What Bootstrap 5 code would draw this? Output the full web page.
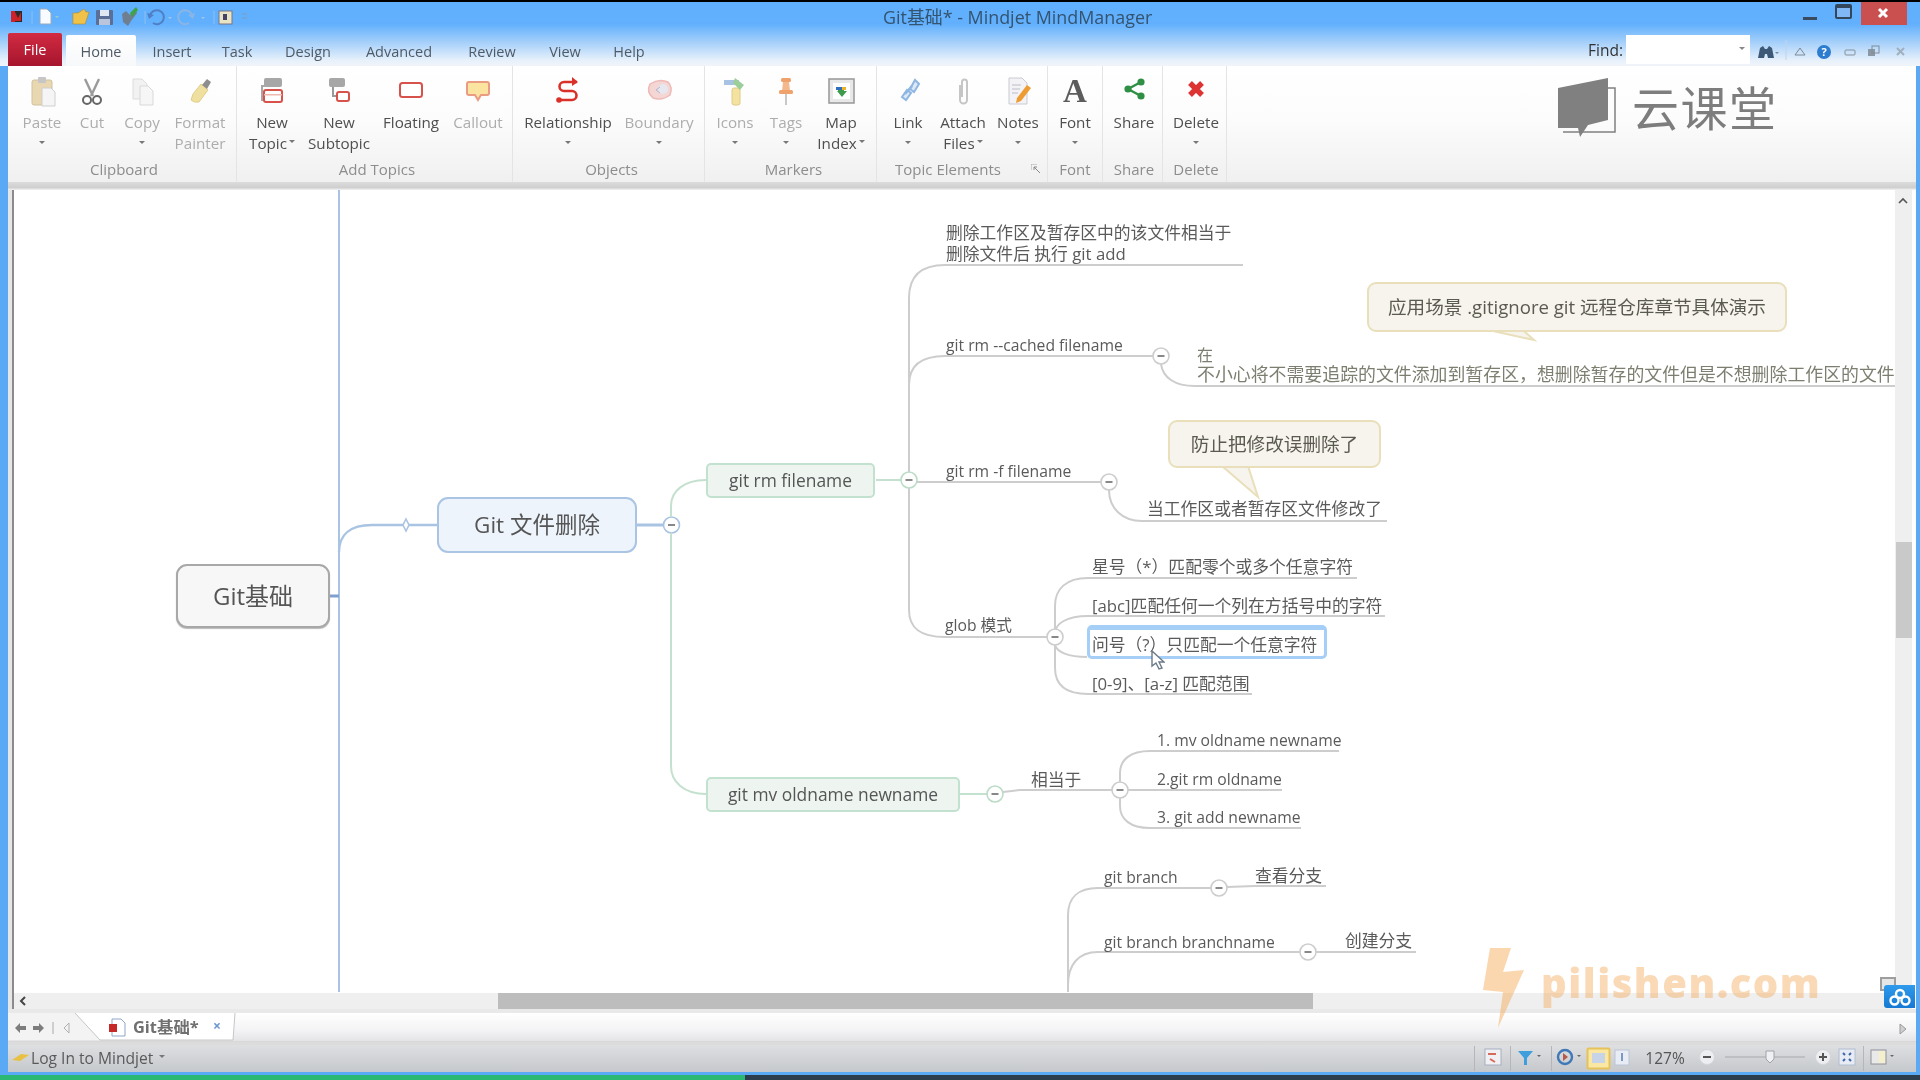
<!DOCTYPE html>
<html lang="zh-CN">
<head>
<meta charset="utf-8">
<title>Git基础 - Mindjet MindManager</title>
<link href="https://cdn.jsdelivr.net/npm/bootstrap@5.3.0/dist/css/bootstrap.min.css" rel="stylesheet">
<style>
html,body{height:100%;overflow:hidden;background:#000}
body{font-family:"Open Sans","Noto Sans CJK SC",sans-serif;color:#555}
.blurwrap{filter:blur(.7px);height:1080px;width:1920px;position:relative;overflow:hidden}
.blackline{height:2px;background:#000}
.frame{height:1073px;background:#5aa9f5;padding:0 4px 0 8px}
.chrome{margin:0 -4px 0 -8px;height:64px;flex:none;background:linear-gradient(180deg,#5fb0ff 0,#62b0fd 22px,#a4cffa 40px,#e6f0fb 58px,#f1f5fa 64px)}
.titlerow{height:31px}
.qat{margin-left:8px;width:260px;height:30px;flex:none}
.wtitle{margin-left:615px;font-size:17.9px;color:#34536f;line-height:31px;white-space:nowrap}
.winbtns{width:118px;height:31px;flex:none;margin-right:0}
.menurow{height:33px;padding-left:8px}
.filetab{width:54px;height:33px;background:linear-gradient(180deg,#d22b42,#a5152d);color:#fff;font-size:14.5px;border-radius:2px 2px 0 0;margin-right:4px}
.mtab{height:31px;margin-top:2px;padding-top:2px;font-size:14.5px;color:#4e5a66}
.mtab.on{background:linear-gradient(180deg,#fff,#f7f8fa);border-radius:2px 2px 0 0}
.t58{width:58px}.t70{width:70px}.t72{width:72px}.t84{width:84px}.t88{width:88px}.t98{width:98px}
.findbox{margin-left:auto;width:332px;height:31px;margin-right:0;flex:none}
.findlbl{font-size:15.5px;color:#333;width:38px;padding-top:6px}
.findinput{width:124px;height:29px;margin-top:2px;background:#fff;position:relative}
.findinput::after{content:"";position:absolute;right:5px;top:12px;border:3px solid transparent;border-top-color:#888}
.ribbon{height:116px;flex:none;background:linear-gradient(180deg,#fff 0,#fcfcfc 45%,#f0f0f1 100%)}
.ribbonfoot{height:8px;flex:none;background:linear-gradient(180deg,#dcdcdc,#cfcfcf 70%,#f3f3f3)}
.rg{height:116px;border-right:1px solid #e4e4e4;flex:none;padding-top:8px;position:relative}
.g1{width:229px;padding-left:4px}.g2{width:276px;padding-left:5px}.g3{width:192px;padding-left:6px}.g4{width:172px;padding-left:6px}.g5{width:171px;padding-left:8px}.g6{width:55px}.g7{width:60px;padding-left:3px}.g8{width:64px;padding-left:3px}
.rbs{height:85px}
.rb{font-size:15.2px;line-height:21px;color:#4f4f4f;white-space:nowrap;flex:none}
.rb.off{color:#adadad}
.ric{height:34px;margin-bottom:4px}
.ric svg{display:block}
.bw40{width:40px}.bw46{width:46px}.bw48{width:48px}.bw54{width:54px}.bw56{width:56px}.bw60{width:60px}.bw64{width:64px}.bw70{width:70px}.bw74{width:74px}.bw84{width:84px}.bw98{width:98px}
.dn{display:block;width:0;height:0;margin:8px auto 0;border:3px solid transparent;border-top-color:#777;border-bottom:0}
.up{display:inline-block;width:0;height:0;margin-left:2px;vertical-align:6px;border:3px solid transparent;border-top-color:#777;border-bottom:0}
.rgl{font-size:15px;line-height:20px;color:#8d8d8d;text-align:center;white-space:nowrap}
.rgl.shift{padding-right:36px}
.launch{position:absolute;right:7px;bottom:9px;width:9px;height:9px}
.fa{font-family:"Liberation Serif",serif;font-weight:700;font-size:33px;line-height:34px;color:#5c5c5c}
.brand{position:absolute;left:1550px;top:70px;height:76px}
.brandtxt{font-family:"Noto Sans CJK SC",sans-serif;font-weight:400;font-size:47px;color:#7d7d7d;letter-spacing:1.5px;line-height:60px;margin-left:12px;margin-top:6px}
.work{height:819px;flex:none;background:#fff;position:relative}
.leftrule{width:6px;flex:none;background:linear-gradient(90deg,#e6e6e6 0 4px,#8b8b8b 4px 6px)}
.mapcol{flex:1;min-width:0;position:relative}
.mapcanvas{position:absolute;left:0;right:0;top:0;bottom:16px;overflow:hidden;background:#fff}
.plane{position:absolute;left:-14px;top:-190px;width:1920px;height:1080px}
.plane svg.wires{position:absolute;left:0;top:0}
.hbar{position:absolute;left:0;right:0;bottom:0;height:16px;background:#efefef}
.hthumb{position:absolute;left:484px;width:815px;top:0;bottom:0;background:#bdbdbd}
.harrow{position:absolute;left:5px;top:2px}
.vbar{width:21px;flex:none;background:#efefef;position:relative;border-right:4px solid #fff}
.vthumb{position:absolute;left:1px;right:0;top:352px;height:96px;background:#c9c9c9}
.varrow{position:absolute;left:3px;top:7px}
.node,.lab,.co{position:absolute;white-space:nowrap}
.node{display:flex;align-items:center;justify-content:center;color:#555}
.lab{transform:translateY(-50%);font-size:15.7px;line-height:18px;color:#5a5a5a}
.cj{font-size:16.8px}
.root{left:176px;top:564px;width:154px;height:64px;background:#f7f7f7;border:2px solid #a8a8a8;border-radius:11px;font-size:24px;box-shadow:0 1px 1px #bbb}
.main{left:437px;top:497px;width:200px;height:56px;background:#eef4fc;border:2.5px solid #aac4e4;border-radius:11px;font-size:22.5px}
.sub1{left:706px;top:463px;width:169px;height:35px;background:#eef5f0;border:2px solid #c2e2cf;border-radius:5px;font-size:17.4px}
.sub2{left:706px;top:777px;width:254px;height:35px;background:#eef5f0;border:2px solid #c2e2cf;border-radius:5px;font-size:17.4px}
.sel{position:absolute;left:1087px;top:625px;width:240px;height:34px;border:3px solid #a6cff8;border-top-width:5px;border-radius:5px;background:#fff}
.co{background:#f6f4ec;border:2px solid #e9dfbb;border-radius:9px;color:#5a5a50;font-size:18.6px;display:flex;align-items:center;justify-content:center}
.co1{left:1367px;top:282px;width:420px;height:50px}
.co2{left:1168px;top:420px;width:213px;height:48px}
.l1{left:946px;top:233px}.l2{left:946px;top:254px}.l3{left:946px;top:345px}
.l5{left:1197px;top:364px;font-size:17.9px;line-height:19px;color:#7d7d70}
.fc{font-size:16px}
.l6{left:946px;top:471px}.l7{left:1147px;top:509px}.l8{left:945px;top:625px}
.l9{left:1092px;top:567px}.l10{left:1092px;top:606px}.l11{left:1092px;top:645px}.l12{left:1092px;top:684px}
.l13{left:1031px;top:780px}.l14{left:1157px;top:740px}.l15{left:1157px;top:779px}.l16{left:1157px;top:817px}
.l17{left:1104px;top:877px}.l18{left:1255px;top:876px}.l19{left:1104px;top:942px}.l20{left:1345px;top:941px}
.cursor{position:absolute;left:1151px;top:650px}
.gap4{height:4px;flex:none;background:#e9e9e9}
.tabstrip{height:29px;flex:none;background:linear-gradient(180deg,#fff,#f4f4f6 60%,#e4e4e6);position:relative;border-bottom:1px solid #d8d8d8}
.tabsvg{position:absolute;left:-8px;top:0}
.tabtxt{position:absolute;left:125px;top:14px;transform:translateY(-50%);font-size:16.4px;font-weight:700;color:#707070;white-space:nowrap}
.tabclose{position:absolute;left:205px;top:13px;transform:translateY(-50%);font-size:14px;font-weight:700;color:#6f97cf;line-height:1}
.tabright{position:absolute;right:9px;top:10px}
.gap3{height:3px;flex:none;background:#dcdcdc}
.status{height:27px;flex:none;background:linear-gradient(180deg,#dedfe1,#c5c8cc);font-size:15.6px;color:#5a5a5a;position:relative;padding-right:11px}
.statl{padding-left:23px}
.statlogin{position:absolute;left:3px;top:7px}
.pct{width:40px;text-align:center;font-size:15.5px;color:#555}
.botblue{height:3px;flex:none;margin:0 -4px 0 -8px;background:#5aa9f5}
.botbar{height:5px;background:#2c3d4e;position:relative}
.botgreen{position:absolute;left:0;top:0;bottom:0;width:745px;background:#2bb873}
.wm{position:absolute;left:1480px;top:945px;pointer-events:none}
.wmtxt{position:absolute;left:1541px;top:957px;font-family:"Open Sans",sans-serif;font-weight:800;font-size:40px;letter-spacing:1.5px;line-height:52px;color:rgba(243,165,80,.42);white-space:nowrap;pointer-events:none}
.cloud{position:absolute;left:1884px;top:985px;width:31px;height:23px;background:linear-gradient(180deg,#2f9bec,#1678d2);border-radius:3px 0 0 3px}
.sqicon{position:absolute;left:1880px;top:977px;width:16px;height:14px;border:2px solid #9e9e9e;background:#e6e6e6}
</style>
</head>
<body>
<div class="blurwrap">
  <div class="blackline"></div>
  <div class="frame d-flex flex-column">
    <div class="chrome d-flex flex-column">
      <div class="titlerow d-flex">
        <svg class="qat" viewBox="8 2 260 30">
          <rect x="11" y="11" width="5" height="11" fill="#d0202c"/><path d="M15 11h7v11h-7z" fill="#2a2a2a"/><path d="M15 12l3 6 3-6v9h-6z" fill="#c22"/>
          <line x1="32" y1="11" x2="32" y2="24" stroke="#8fbfee"/>
          <path d="M40 9h7l4 4v11H40z" fill="#f8fbff" stroke="#9ab"/><path d="M55 16l2 2 2-2z" fill="#9cc"/>
          <path d="M73 13h5l6-4 2 3h3l-4 12H73z" fill="#f0c24a" stroke="#b98a20" stroke-width=".6"/>
          <rect x="96" y="10" width="17" height="15" rx="1" fill="#5a6f98"/><rect x="100" y="10" width="9" height="6" fill="#dfe7f2"/><rect x="99" y="19" width="11" height="6" fill="#b9c5db"/>
          <path d="M122 14l4-3 4 4 5-6 2 4-6 8-3 5-5-4z" fill="#6f7f90"/><path d="M130 13l6-6 2 3-6 7z" fill="#3fa34a"/>
          <line x1="145" y1="11" x2="145" y2="24" stroke="#8fbfee"/>
          <path d="M150 16a7 7 0 1 1 3 7" fill="none" stroke="#4f7fc4" stroke-width="2"/><path d="M147 13l2 6 5-4z" fill="#4f7fc4"/>
          <path d="M168 17l2 2 2-2z" fill="#a3c4e6"/>
          <path d="M192 16a7 7 0 1 0-3 7" fill="none" stroke="#8ab5e4" stroke-width="2"/><path d="M195 13l-2 6-5-4z" fill="#8ab5e4"/>
          <path d="M201 17l2 2 2-2z" fill="#a3c4e6"/>
          <line x1="214" y1="11" x2="214" y2="24" stroke="#8fbfee"/>
          <rect x="219" y="11" width="13" height="13" fill="#e9e4c4" stroke="#778"/><rect x="223" y="14" width="4" height="6" fill="#446"/>
          <path d="M242 14h5M242 18h5" stroke="#7d9cbf"/>
        </svg>
        <div class="wtitle">Git基础* - Mindjet MindManager</div>
        <svg class="winbtns ms-auto" viewBox="1802 2 118 31">
          <rect x="1803" y="17" width="14" height="3" fill="#3a4b60"/>
          <rect x="1836" y="5" width="15" height="13" rx="1" fill="#7fb8f5" stroke="#34465c" stroke-width="2"/><rect x="1837" y="5" width="13" height="3" fill="#34465c"/>
          <rect x="1861" y="2" width="46" height="23" fill="#c9504f"/>
          <path d="M1879 9l8 8m0-8l-8 8" stroke="#fff" stroke-width="3"/>
        </svg>
      </div>
      <div class="menurow d-flex">
        <div class="filetab d-flex align-items-center justify-content-center">File</div>
        <div class="mtab on t70 d-flex align-items-center justify-content-center">Home</div>
        <div class="mtab t72 d-flex align-items-center justify-content-center">Insert</div>
        <div class="mtab t58 d-flex align-items-center justify-content-center">Task</div>
        <div class="mtab t84 d-flex align-items-center justify-content-center">Design</div>
        <div class="mtab t98 d-flex align-items-center justify-content-center">Advanced</div>
        <div class="mtab t88 d-flex align-items-center justify-content-center">Review</div>
        <div class="mtab t58 d-flex align-items-center justify-content-center">View</div>
        <div class="mtab t70 d-flex align-items-center justify-content-center">Help</div>
        <div class="findbox d-flex align-items-start">
          <div class="findlbl">Find:</div>
          <div class="findinput"></div>
          <svg width="170" height="31" viewBox="1750 33 170 31">
            <path d="M1758 58l2-10 3-2 2 3h2l2-3 3 2 2 10h-6l-1-4h-2l-1 4z" fill="#3e5878"/>
            <path d="M1775 52l2 2 2-2z" fill="#7a8a9a"/>
            <line x1="1786" y1="40" x2="1786" y2="60" stroke="#bcd4ec"/>
            <path d="M1795 55l5-7 5 7z" fill="none" stroke="#7d8a96"/>
            <circle cx="1824" cy="52" r="7" fill="#2c7cd0"/><text x="1824" y="56" font-size="11" font-weight="700" fill="#fff" text-anchor="middle" font-family="Open Sans">?</text>
            <rect x="1845" y="50" width="10" height="5" rx="1" fill="none" stroke="#84919c"/>
            <rect x="1868" y="49" width="7" height="7" fill="#8b98a4"/><rect x="1872" y="46" width="7" height="7" fill="none" stroke="#7f8c98"/>
            <path d="M1897 48l7 7m0-7l-7 7" stroke="#9fb0bf" stroke-width="2"/>
          </svg>
        </div>
      </div>
    </div>

    <div class="ribbon d-flex">
      <div class="rg g1">
        <div class="rbs d-flex">
          <div class="rb off bw60 text-center"><div class="ric d-flex justify-content-center"><svg width="30" height="34" viewBox="0 0 30 34"><rect x="5" y="6" width="20" height="25" rx="2" fill="#e8d7b0" stroke="#d0c29d"/><rect x="11" y="3" width="8" height="6" rx="1" fill="#c6c6c6"/><path d="M15 14h9l4 4v14H15z" fill="#f5f5f5" stroke="#cfcfcf"/></svg></div>Paste<span class="dn"></span></div>
          <div class="rb off bw40 text-center"><div class="ric d-flex justify-content-center"><svg width="30" height="34" viewBox="0 0 30 34"><path d="M8 5l8 17M22 5l-8 17" stroke="#9b9b9b" stroke-width="2.4"/><circle cx="10" cy="26" r="4" fill="none" stroke="#666" stroke-width="2"/><circle cx="20" cy="26" r="4" fill="none" stroke="#666" stroke-width="2"/></svg></div>Cut</div>
          <div class="rb off bw60 text-center"><div class="ric d-flex justify-content-center"><svg width="30" height="34" viewBox="0 0 30 34"><path d="M6 5h9l5 5v15H6z" fill="#f2f2f2" stroke="#dcdcdc"/><path d="M13 12h8l5 5v14H13z" fill="#f6f6f6" stroke="#d9d9d9"/></svg></div>Copy<span class="dn"></span></div>
          <div class="rb off bw56 text-center"><div class="ric d-flex justify-content-center"><svg width="30" height="34" viewBox="0 0 30 34"><path d="M8 20l8-10 7 6-9 12q-5 1-8-2z" fill="#f0e0a0" stroke="#e0cf8a"/><path d="M17 11l5-6 4 3-4 7z" fill="#8e8e8e"/></svg></div>Format<br>Painter</div>
        </div>
        <div class="rgl">Clipboard</div>
      </div>
      <div class="rg g2">
        <div class="rbs d-flex">
          <div class="rb bw60 text-center"><div class="ric d-flex justify-content-center"><svg width="30" height="34" viewBox="0 0 30 34"><rect x="7" y="4" width="18" height="9" rx="2" fill="#a7a7a7"/><path d="M8 12H5v14h3" fill="none" stroke="#a7a7a7" stroke-width="2"/><rect x="7" y="16" width="18" height="12" rx="2" fill="#fff" stroke="#d7524a" stroke-width="2"/><rect x="7" y="20" width="18" height="1.5" fill="#f0b7b0"/></svg></div>New<br>Topic<span class="up"></span></div>
          <div class="rb bw74 text-center"><div class="ric d-flex justify-content-center"><svg width="30" height="34" viewBox="0 0 30 34"><rect x="5" y="4" width="16" height="9" rx="2" fill="#a7a7a7"/><path d="M9 13v9h5" fill="none" stroke="#999" stroke-width="2"/><rect x="13" y="18" width="12" height="9" rx="2" fill="#fff" stroke="#d7524a" stroke-width="2"/></svg></div>New<br>Subtopic</div>
          <div class="rb bw70 text-center"><div class="ric d-flex justify-content-center"><svg width="30" height="34" viewBox="0 0 30 34"><rect x="4" y="9" width="22" height="14" rx="2.5" fill="#fff" stroke="#d7524a" stroke-width="2"/></svg></div>Floating</div>
          <div class="rb off bw64 text-center"><div class="ric d-flex justify-content-center"><svg width="30" height="34" viewBox="0 0 30 34"><path d="M6 8h18q2 0 2 2v9q0 2-2 2h-6l-3 5-3-5H6q-2 0-2-2v-9q0-2 2-2z" fill="#fbe3a0" stroke="#eb9b82" stroke-width="2"/></svg></div>Callout</div>
        </div>
        <div class="rgl">Add Topics</div>
      </div>
      <div class="rg g3">
        <div class="rbs d-flex">
          <div class="rb bw98 text-center"><div class="ric d-flex justify-content-center"><svg width="30" height="34" viewBox="0 0 30 34"><path d="M24 8H11a4 4 0 0 0 0 9h8a4 4 0 0 1 0 9H7" fill="none" stroke="#d9302a" stroke-width="2.6"/><path d="M19 3l6 5-6 4z" fill="#d9302a"/><circle cx="6" cy="26" r="2.8" fill="#d9302a"/></svg></div>Relationship<span class="dn"></span></div>
          <div class="rb off bw84 text-center"><div class="ric d-flex justify-content-center"><svg width="30" height="34" viewBox="0 0 30 34"><path d="M6 10q9-6 18-2 5 5 2 13-8 6-17 3-7-6-3-14z" fill="#f4d6d4" stroke="#eeb9b6" stroke-width="1.5"/><circle cx="19" cy="15" r="5" fill="#e7e7ef"/><path d="M12 16l4-3m-4 3l4 3" stroke="#b0b9d0"/></svg></div>Boundary<span class="dn"></span></div>
        </div>
        <div class="rgl">Objects</div>
      </div>
      <div class="rg g4">
        <div class="rbs d-flex">
          <div class="rb off bw48 text-center"><div class="ric d-flex justify-content-center"><svg width="30" height="34" viewBox="0 0 30 34"><rect x="12" y="14" width="8" height="17" rx="2" fill="#f4e2a0" stroke="#e0cc88"/><path d="M4 6h15v5H4z" fill="#a8c2e4"/><path d="M15 4l9 7-4 5-7-7z" fill="#9cce9a"/></svg></div>Icons<span class="dn"></span></div>
          <div class="rb off bw54 text-center"><div class="ric d-flex justify-content-center"><svg width="30" height="34" viewBox="0 0 30 34"><rect x="10" y="4" width="10" height="4" rx="1.5" fill="#f0a26d"/><path d="M12 8h6l1 9H11z" fill="#f3b88d"/><rect x="8" y="16" width="14" height="4" rx="1.5" fill="#f0a26d"/><path d="M15 20v11" stroke="#c8c8c8" stroke-width="2"/></svg></div>Tags<span class="dn"></span></div>
          <div class="rb bw56 text-center"><div class="ric d-flex justify-content-center"><svg width="30" height="34" viewBox="0 0 30 34"><rect x="3" y="5" width="25" height="24" fill="#e8e8e8" stroke="#9d9d9d" stroke-width="1.6"/><rect x="7" y="9" width="17" height="16" fill="#fff"/><path d="M12 14h6v3h3l-5 6-5-6h1z" fill="#3d9c4b"/><path d="M10 13h6v3h-6z" fill="#2f6fc0"/><path d="M16 13h4v3h-4z" fill="#ecb329"/></svg></div>Map<br>Index<span class="up"></span></div>
        </div>
        <div class="rgl">Markers</div>
      </div>
      <div class="rg g5">
        <div class="rbs d-flex">
          <div class="rb bw46 text-center"><div class="ric d-flex justify-content-center"><svg width="30" height="34" viewBox="0 0 30 34"><path d="M9 23l4 3 5-7-4-3zM17 15l4 3 5-8-4-4z" fill="#dce9f7" stroke="#8fb6e2" stroke-width="2"/><path d="M12 20l7-8" stroke="#8fb6e2" stroke-width="2.5"/></svg></div>Link<span class="dn"></span></div>
          <div class="rb bw64 text-center"><div class="ric d-flex justify-content-center"><svg width="30" height="34" viewBox="0 0 30 34"><path d="M12 11v15a3.500 3.500 0 0 0 7 0V8a2.500 2.500 0 0 0-5 0v15" fill="none" stroke="#c6c6c6" stroke-width="2"/></svg></div>Attach<br>Files<span class="up"></span></div>
          <div class="rb bw46 text-center"><div class="ric d-flex justify-content-center"><svg width="30" height="34" viewBox="0 0 30 34"><path d="M6 4h13l5 5v21H6z" fill="#f3f3f6" stroke="#c9c9d3"/><path d="M9 11h9M9 15h8M9 19h6" stroke="#bcbcc6"/><path d="M14 24l10-13 4 3-10 13-5 2z" fill="#ee9c32"/></svg></div>Notes<span class="dn"></span></div>
        </div>
        <div class="rgl shift">Topic Elements</div>
        <svg class="launch" viewBox="0 0 9 9"><path d="M0 0h6M0 0v6" stroke="#aaa"/><path d="M9 9L3 3m0 3V3h3" stroke="#888" fill="none"/></svg>
      </div>
      <div class="rg g6">
        <div class="rbs d-flex justify-content-center">
          <div class="rb text-center"><div class="ric fa">A</div>Font<span class="dn"></span></div>
        </div>
        <div class="rgl">Font</div>
      </div>
      <div class="rg g7">
        <div class="rbs d-flex justify-content-center">
          <div class="rb text-center"><div class="ric d-flex justify-content-center"><svg width="30" height="34" viewBox="0 0 30 34"><path d="M22 8L9 15l13 7" fill="none" stroke="#2f8f45" stroke-width="2.4"/><circle cx="22" cy="8" r="3.600" fill="#2f8f45"/><circle cx="9" cy="15" r="3.600" fill="#2f8f45"/><circle cx="22" cy="22" r="3.600" fill="#2f8f45"/></svg></div>Share</div>
        </div>
        <div class="rgl">Share</div>
      </div>
      <div class="rg g8">
        <div class="rbs d-flex justify-content-center">
          <div class="rb text-center"><div class="ric d-flex justify-content-center"><svg width="30" height="34" viewBox="0 0 30 34"><path d="M9 9l12 12m0-12L9 21" stroke="#dd3333" stroke-width="5.400"/></svg></div>Delete<span class="dn"></span></div>
        </div>
        <div class="rgl">Delete</div>
      </div>
    </div>
    <div class="ribbonfoot"></div>

    <div class="work d-flex">
      <div class="leftrule"></div>
      <div class="mapcol">
        <div class="mapcanvas">
          <div class="plane">
            <svg class="wires" width="1920" height="1080" viewBox="0 0 1920 1080" fill="none">
              <g stroke="#a9c3e3" stroke-width="2">
                <path d="M339 190V992"/>
                <path d="M339 552C339 535 350 525 372 525H437" stroke-width="2.4"/>
                <path d="M637 525H664" stroke-width="3"/>
              </g>
              <path d="M330 596H339" stroke="#7fa0cf" stroke-width="3"/>
              <path d="M406 519l3 6-3 6-3-6z" fill="#fff" stroke="#a9c3e3" stroke-width="1.600"/>
              <circle cx="671.500" cy="525" r="8" fill="#fff" stroke="#a9c3e3" stroke-width="1.600"/><path d="M668 525h7" stroke="#888" stroke-width="2"/>
              <g stroke="#c4e0cf" stroke-width="2">
                <path d="M671 517V506C671 491 684 480 706 480"/>
                <path d="M671 533V766C671 782 684 794 706 794"/>
                <path d="M876 480H901"/><path d="M960 794H987"/>
              </g>
              <g stroke="#cdcdcd" stroke-width="2">
                <path d="M909 472V298C909 277 920 265 945 265H1243"/>
                <path d="M909 385C909 367 920 356 945 356H1153"/>
                <path d="M917 482H1101"/>
                <path d="M909 488V610C909 628 920 637 945 637H1047"/>
                <path d="M1161 364C1163 378 1175 386 1195 386H1896"/>
                <path d="M1109 490C1109 508 1122 521 1142 521H1387"/>
                <path d="M1055 629V606C1055 589 1066 578 1088 578H1357"/>
                <path d="M1055 632C1056 624 1066 616 1088 616H1385"/>
                <path d="M1055 645C1057 652 1068 657 1087 657"/>
                <path d="M1055 645V668C1055 685 1066 694 1088 694H1252"/>
                <path d="M1003 792L1020 790H1112"/>
                <path d="M1120 782V773C1120 760 1130 751 1150 751H1339"/>
                <path d="M1128 790H1282"/>
                <path d="M1120 798V806C1120 819 1130 828 1150 828H1301"/>
                <path d="M1068 992V915C1068 898 1078 888 1098 888H1211"/>
                <path d="M1068 985C1068 965 1078 952 1098 952H1300"/>
                <path d="M1227 887L1255 886H1326"/>
                <path d="M1316 952H1416"/>
                <path d="M1063 637H1047"/>
              </g>
              <circle cx="909" cy="480" r="8" fill="#fff" stroke="#bcdcc8" stroke-width="1.600"/><path d="M905.500 480h7" stroke="#888" stroke-width="2"/>
              <circle cx="995" cy="794" r="8" fill="#fff" stroke="#bcdcc8" stroke-width="1.600"/><path d="M991.500 794h7" stroke="#888" stroke-width="2"/>
              <g fill="#fff" stroke="#cdcdcd" stroke-width="1.600">
                <circle cx="1161" cy="356" r="8"/><circle cx="1109" cy="482" r="8"/><circle cx="1055" cy="637" r="8"/><circle cx="1120" cy="790" r="8"/><circle cx="1219" cy="888" r="8"/><circle cx="1308" cy="952" r="8"/>
              </g>
              <path d="M1157.500 356h7M1105.500 482h7M1051.500 637h7M1116.500 790h7M1215.500 888h7M1304.500 952h7" stroke="#888" stroke-width="2"/>
              <path d="M1222 466L1258 497L1248 466Z" fill="#f6f4ec" stroke="#e9dfbb" stroke-width="2"/>
              <path d="M1493 331L1534 340L1524 331Z" fill="#f6f4ec" stroke="#e9dfbb" stroke-width="2"/>
            </svg>
            <div class="node root">Git基础</div>
            <div class="node main">Git 文件删除</div>
            <div class="node sub1">git rm filename</div>
            <div class="node sub2">git mv oldname newname</div>
            <div class="co co1">应用场景 .gitignore git 远程仓库章节具体演示</div>
            <div class="co co2">防止把修改误删除了</div>
            <div class="sel"></div>
            <div class="lab cj l1">删除工作区及暂存区中的该文件相当于</div>
            <div class="lab cj l2">删除文件后 执行 git add</div>
            <div class="lab l3">git rm --cached filename</div>
            <div class="lab l5"><span class="fc">在</span><br>不小心将不需要追踪的文件添加到暂存区，想删除暂存的文件但是不想删除工作区的文件</div>
            <div class="lab l6">git rm -f filename</div>
            <div class="lab cj l7">当工作区或者暂存区文件修改了</div>
            <div class="lab l8">glob 模式</div>
            <div class="lab cj l9">星号（*）匹配零个或多个任意字符</div>
            <div class="lab cj l10">[abc]匹配任何一个列在方括号中的字符</div>
            <div class="lab cj l11">问号（?）只匹配一个任意字符</div>
            <div class="lab cj l12">[0-9]、[a-z] 匹配范围</div>
            <div class="lab cj l13">相当于</div>
            <div class="lab l14">1. mv oldname newname</div>
            <div class="lab l15">2.git rm oldname</div>
            <div class="lab l16">3. git add newname</div>
            <div class="lab l17">git branch</div>
            <div class="lab cj l18">查看分支</div>
            <div class="lab l19">git branch branchname</div>
            <div class="lab cj l20">创建分支</div>
            <svg class="cursor" width="14" height="20" viewBox="0 0 14 20"><path d="M1 1v15l4-3 3 6 3-1-3-6h5z" fill="#fff" stroke="#6b7a86" stroke-width="1.400"/></svg>
          </div>
        </div>
        <div class="hbar"><div class="hthumb"></div>
          <svg class="harrow" width="8" height="12" viewBox="0 0 8 12"><path d="M6 2L2 6l4 4" fill="none" stroke="#444" stroke-width="2"/></svg>
        </div>
      </div>
      <div class="vbar"><div class="vthumb"></div>
        <svg class="varrow" width="10" height="7" viewBox="0 0 10 7"><path d="M1 6l4-4 4 4" fill="none" stroke="#555" stroke-width="1.600"/></svg>
      </div>
    </div>
    <div class="gap4"></div>

    <div class="tabstrip">
      <svg class="tabsvg" width="260" height="29" viewBox="0 0 260 29">
        <path d="M75 0L100 27H233L235 0Z" fill="#fff"/>
        <path d="M8 0H75L100 27H8Z" fill="#f3f3f3"/>
        <path d="M75 0L100 27H233L235 0" fill="none" stroke="#c6c6c6"/>
        <path d="M15 15l5-5v3h6v4h-6v3z" fill="#7d7d7d"/><path d="M44 15l-5-5v3h-6v4h6v3z" fill="#7d7d7d"/>
        <line x1="53" y1="9" x2="53" y2="21" stroke="#aaa"/><path d="M69 10l-5 5 5 5z" fill="none" stroke="#b0b0b0"/>
        <path d="M112 6h9l4 4v13h-13z" fill="#fff" stroke="#8fa7c5"/><rect x="109" y="11" width="8" height="8" fill="#c62828"/>
      </svg>
      <div class="tabtxt">Git基础*</div>
      <div class="tabclose">×</div>
      <svg class="tabright" width="8" height="12" viewBox="0 0 8 12"><path d="M1 1l6 5-6 5z" fill="#d0d0d0" stroke="#9a9a9a"/></svg>
    </div>
    <div class="gap3"></div>

    <div class="status d-flex align-items-center">
      <svg class="statlogin" width="20" height="12" viewBox="0 0 20 12"><path d="M1 8l9-6 8 1-9 6z" fill="#e8c043"/></svg>
      <div class="statl">Log In to Mindjet <span class="up"></span></div>
      <div class="ms-auto d-flex align-items-center">
        <svg width="171" height="27" viewBox="1474 1045 171 27" fill="none">
          <path d="M1474.500 1046v25M1510.500 1046v25M1551.500 1046v25" stroke="#b4b6ba"/>
          <rect x="1485" y="1049" width="16" height="16" fill="#f1f1f4" stroke="#a6afc0"/><path d="M1488 1054h8M1490 1059l5 3" stroke="#d66a5c" stroke-width="2"/>
          <path d="M1518 1051h15l-6 7v7h-3v-7z" fill="#3f9fdc"/><path d="M1537 1055l2 2 2-2z" fill="#666"/>
          <circle cx="1565" cy="1057" r="7" stroke="#3f78b7" stroke-width="2.400"/><path d="M1563 1053l5 4-5 4z" fill="#b45a4a"/><path d="M1577 1055l2 2 2-2z" fill="#666"/>
          <rect x="1587.500" y="1048.500" width="22" height="20" rx="1" fill="#f9e7a3" stroke="#e5c35a" stroke-width="2"/><rect x="1592" y="1053" width="13" height="10" fill="#c7d4e8"/>
          <rect x="1615" y="1050" width="14" height="15" fill="#e8ecf4" stroke="#bcc6d8"/><path d="M1622 1053v8" stroke="#7d97c0" stroke-width="2"/>
        </svg>
        <div class="pct">127%</div>
        <svg width="220" height="27" viewBox="1685 1045 220 27" fill="none">
          <circle cx="1707" cy="1057" r="7.500" fill="#eceef1" stroke="#d4d6da"/><path d="M1703 1057h8" stroke="#555" stroke-width="2"/>
          <path d="M1725 1057H1805" stroke="#a7a9ad"/><path d="M1766 1051h8v8l-4 4-4-4z" fill="#eef0f2" stroke="#9ea2a8"/>
          <circle cx="1823" cy="1057" r="7.500" fill="#eceef1" stroke="#d4d6da"/><path d="M1819 1057h8M1823 1053v8" stroke="#555" stroke-width="2"/>
          <rect x="1839" y="1049" width="16" height="16" fill="#e6ebf4" stroke="#b2bed2"/><path d="M1843 1053l2 2M1851 1053l-2 2M1843 1061l2-2M1851 1061l-2-2" stroke="#3f64a8" stroke-width="2"/>
          <path d="M1863.500 1046v25" stroke="#b4b6ba"/>
          <rect x="1871" y="1050" width="15" height="14" fill="#e9e9ea" stroke="#8f9296"/><rect x="1879" y="1051" width="6" height="12" fill="#f6efcb"/><path d="M1890 1055l2 2 2-2z" fill="#666"/>
        </svg>
      </div>
    </div>
    <div class="botblue"></div>
  </div>
  <div class="botbar"><div class="botgreen"></div></div>

  <div class="brand d-flex align-items-start">
    <svg width="70" height="70" viewBox="1550 70 70 70"><path d="M1558 88L1608 78V120L1588 125L1580 137L1578 128H1558Z" fill="#808080"/><path d="M1608 88H1615V132H1563" fill="none" stroke="#808080" stroke-width="1.500"/></svg>
    <div class="brandtxt">云课堂</div>
  </div>

  <svg class="wm" width="50" height="90" viewBox="1480 945 50 90"><path d="M1490 948H1511L1503 972L1524 970L1498 1028L1503 992L1483 990Z" fill="#f5a64e" opacity=".45"/></svg>
  <div class="wmtxt">pilishen.com</div>
  <div class="sqicon"></div>
  <div class="cloud d-flex align-items-center justify-content-center"><svg width="24" height="18" viewBox="0 0 24 18" fill="none" stroke="#fff" stroke-width="2.400"><circle cx="12" cy="6" r="4"/><circle cx="6.500" cy="12.500" r="4"/><circle cx="17.500" cy="12.500" r="4"/></svg></div>
</div>
<script src="https://cdn.jsdelivr.net/npm/bootstrap@5.3.0/dist/js/bootstrap.bundle.min.js"></script>
</body>
</html>
